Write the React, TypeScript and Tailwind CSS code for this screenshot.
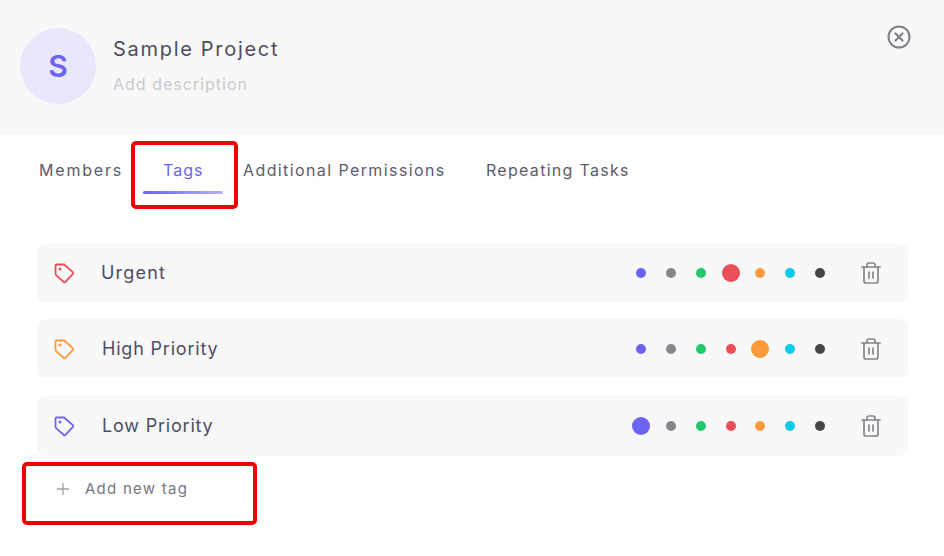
import React from "react";
import { Trash2 } from "lucide-react";

const COLORS = ["#6c63f0", "#85878c", "#22c76b", "#ea4f57", "#fd9a3c", "#0ccbea", "#454547"];

const TAGS = [
  { name: "Urgent", color: "#ea4f57", active: 3, h: "h-[59px]", text: "ml-[25px] tracking-[1.2px]" },
  { name: "High Priority", color: "#fd9a3c", active: 4, h: "h-[59px]", text: "ml-[26px] tracking-[0.8px]" },
  { name: "Low Priority", color: "#6c63f0", active: 0, h: "h-[61px]", text: "ml-[26px] tracking-[0.8px]" },
];

function TagIcon({ color }: { color: string }) {
  return (
    <svg width="24" height="24" viewBox="0 0 24 24" fill="none" stroke={color} strokeWidth="1.8" strokeLinejoin="round" strokeLinecap="round">
      <path d="M3.5 4.6c0-.6.5-1.1 1.1-1.1h7.6l8.6 7.7c.5.4.5 1.1.1 1.6l-7.5 8.1c-.4.5-1.1.5-1.6.1L4.6 14.6c-.7-.6-1.1-1.4-1.1-2.3z" />
      <circle cx="8" cy="8" r="0.6" fill={color} />
    </svg>
  );
}

function CloseIcon() {
  return (
    <svg width="24" height="24" viewBox="0 0 24 24" fill="none" stroke="#7d7f86" strokeWidth="2" strokeLinecap="round">
      <circle cx="12" cy="12" r="10.5" />
      <path d="M8.5 8.5l7 7M15.5 8.5l-7 7" strokeWidth="2.2" />
    </svg>
  );
}

function PlusIcon() {
  return (
    <svg width="12" height="12" viewBox="0 0 12 12" fill="none" stroke="#a0a0a6" strokeWidth="1.3">
      <path d="M6 0v12M0 6h12" />
    </svg>
  );
}

export default function App() {
  return (
    <div className="relative w-[944px] h-[556px] overflow-hidden bg-white font-['Inter',sans-serif] text-[#4d4c63]">
      {/* Header */}
      <header className="h-[135px] bg-[#f8f8f8] flex items-start pt-7 pl-5 pr-[33px]">
        <div className="w-[76px] h-[76px] rounded-full bg-[#e9e7fb] flex items-center justify-center text-[#6c63f0] text-[30px] font-semibold shrink-0">
          S
        </div>
        <div className="ml-[17px] flex-1 pt-[6px]">
          <div className="text-[20px] leading-[30px] tracking-[1.7px]">Sample Project</div>
          <div className="mt-[8px] text-[16px] leading-6 tracking-[1px] text-[#c9c9cf]">Add description</div>
        </div>
        <div className="-mt-[3px]">
          <CloseIcon />
        </div>
      </header>

      {/* Tabs */}
      <nav className="flex pl-[19px] h-[58px] text-[16px] text-[#5c5b6e]">
        <div className="px-5 pt-[23px] w-[124px] whitespace-nowrap tracking-[1.8px]">Members</div>
        <div className="relative px-5 pt-[23px] w-[80px] text-center text-[#6c63f0] tracking-[1px]">
          Tags
          <div className="absolute left-0 right-0 bottom-[-1px] h-[3px] rounded-full bg-gradient-to-r from-[#6c63f0] to-[#b5b0f7]" />
        </div>
        <div className="px-5 pt-[23px] w-[243px] whitespace-nowrap tracking-[1.4px]">Additional Permissions</div>
        <div className="px-5 pt-[23px] whitespace-nowrap tracking-[1.3px]">Repeating Tasks</div>
      </nav>

      {/* Tag rows */}
      <section className="mt-[50px] ml-[37px] mr-[36px] flex flex-col gap-[17px]">
        {TAGS.map((t) => (
          <div key={t.name} className={`${t.h} rounded-lg bg-[#f8f8f8] flex items-center pl-[15px] pr-[25px]`}>
            <TagIcon color={t.color} />
            <span className={`${t.text} text-[18px] flex-1`}>{t.name}</span>
            <div className="flex items-center mr-[24px]">
              {COLORS.map((c, i) => (
                <div key={c} className="w-[29.83px] flex items-center justify-center">
                  <div
                    className={i === t.active ? "w-[18px] h-[18px] rounded-full" : "w-[10px] h-[10px] rounded-full"}
                    style={{ backgroundColor: c }}
                  />
                </div>
              ))}
            </div>
            <Trash2 size={24} strokeWidth={1.7} color="#85878c" />
          </div>
        ))}
      </section>

      {/* Add new tag */}
      <div className="flex items-center mt-[21px] pl-[57px] h-6 text-[15px] tracking-[1.25px] text-[#77767f]">
        <span className="w-[28px]">
          <PlusIcon />
        </span>
        <span>Add new tag</span>
      </div>

      {/* Red annotation boxes */}
      <div className="absolute left-[131px] top-[141px] w-[107px] h-[68px] border-4 border-[#f00000] rounded-[5px]" />
      <div className="absolute left-[22px] top-[462px] w-[235px] h-[63px] border-4 border-[#f00000] rounded-[5px]" />
    </div>
  );
}
